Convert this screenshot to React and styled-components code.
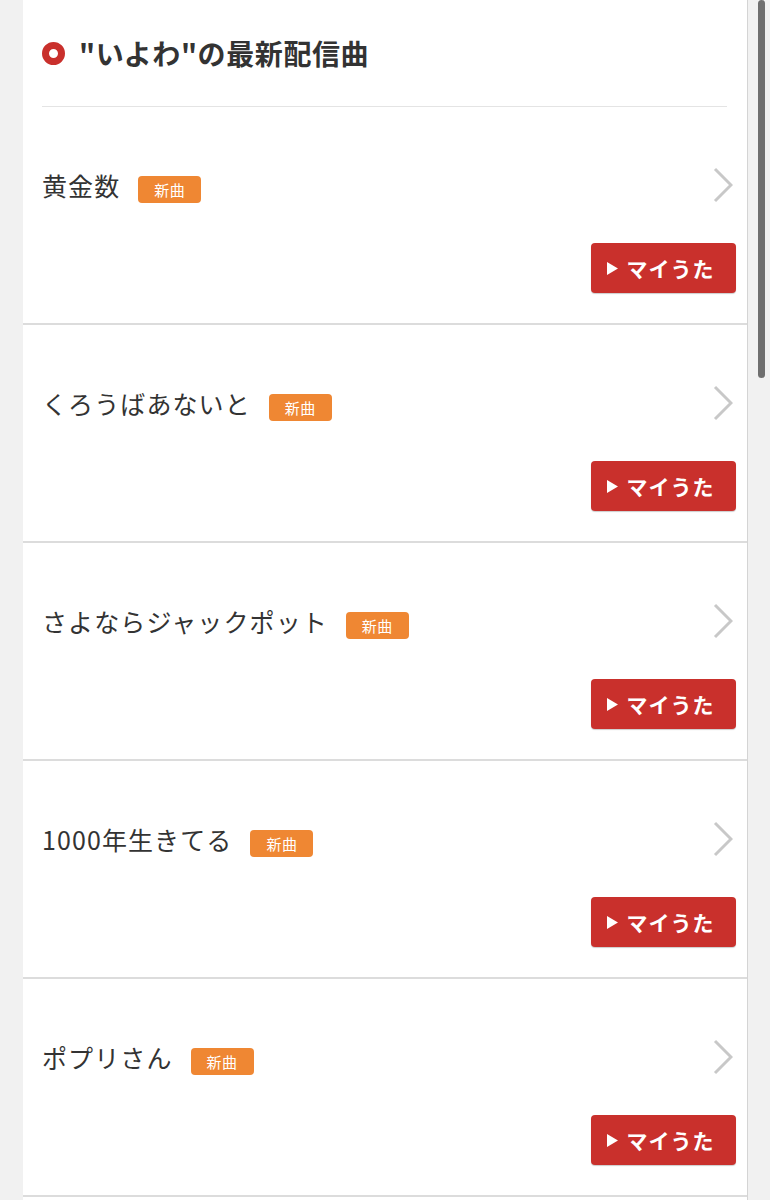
import styled, { createGlobalStyle } from "styled-components"

const songs = ["黄金数", "くろうばあないと", "さよならジャックポット", "1000年生きてる", "ポプリさん"]

const App = () => {
    return (
        <Page>
            <GlobalStyle />
            <Card>
                <Header>
                    <HeaderInner>
                        <RingIcon />
                        <HeaderTitle>"いよわ"の最新配信曲</HeaderTitle>
                    </HeaderInner>
                </Header>
                {songs.map((title) => (
                    <SongRow key={title}>
                        <TitleLine>
                            <SongTitle>{title}</SongTitle>
                            <NewBadge>新曲</NewBadge>
                            <Chevron viewBox="0 0 20 36">
                                <polyline points="2,2 18,18 2,34" />
                            </Chevron>
                        </TitleLine>
                        <MyUtaButton>
                            <svg width="11" height="13" viewBox="0 0 11 13">
                                <polygon points="0,0 11,6.5 0,13" fill="#fff" />
                            </svg>
                            マイうた
                        </MyUtaButton>
                    </SongRow>
                ))}
            </Card>
            <ScrollTrack>
                <ScrollThumb />
            </ScrollTrack>
        </Page>
    )
}

export default App

const GlobalStyle = createGlobalStyle`
html, body {
    margin: 0;
    padding: 0;
    overflow: hidden;
    background: #f1f1f1;
}
* {
    box-sizing: border-box;
}
`

const Page = styled.div`
display: flex;
flex-direction: row;
height: 1200px;
overflow: hidden;
padding-left: 23px;
background: #f1f1f1;
font-family: "Noto Sans CJK JP", "Noto Sans", sans-serif;
color: #333;
`

const Card = styled.div`
width: 725px;
flex-shrink: 0;
background: #fff;
border-right: 1px solid #d4d4d4;
display: flex;
flex-direction: column;
`

const Header = styled.div`
padding: 0 20px 0 19px;
`

const HeaderInner = styled.div`
height: 107px;
display: flex;
flex-direction: row;
align-items: center;
border-bottom: 1px solid #e4e4e4;
`

const RingIcon = styled.span`
width: 23px;
height: 23px;
border-radius: 50%;
border: 7px solid #c9302c;
background: #fff;
margin-right: 14px;
flex-shrink: 0;
`

const HeaderTitle = styled.h2`
margin: 0;
font-size: 28px;
font-weight: 700;
letter-spacing: 0.6px;
color: #333;
`

const SongRow = styled.div`
height: 218px;
flex-shrink: 0;
display: flex;
flex-direction: column;
padding: 60px 11px 30px 19px;
border-bottom: 2px solid #dcdcdc;
`

const TitleLine = styled.div`
height: 36px;
display: flex;
flex-direction: row;
align-items: center;
`

const SongTitle = styled.span`
font-size: 25px;
letter-spacing: 1.1px;
color: #333;
`

const NewBadge = styled.span`
margin-left: 18px;
margin-top: 9px;
width: 63px;
height: 27px;
border-radius: 4px;
background: #ef8733;
color: #fff;
font-size: 15px;
letter-spacing: 0.5px;
display: flex;
align-items: center;
justify-content: center;
`

const Chevron = styled.svg`
margin-left: auto;
margin-right: 3px;
width: 20px;
height: 36px;
fill: none;
stroke: #c8c8c8;
stroke-width: 3;
`

const MyUtaButton = styled.button`
align-self: flex-end;
margin-top: 40px;
width: 145px;
height: 50px;
border: none;
border-radius: 4px;
background: #c9302c;
color: #fff;
font-family: "Noto Sans CJK JP", sans-serif;
font-size: 21px;
font-weight: 700;
letter-spacing: 1px;
display: flex;
align-items: center;
justify-content: center;
gap: 9px;
padding: 0 6px 0 0;
box-shadow: 0 1px 1px rgba(0, 0, 0, 0.2);
`

const ScrollTrack = styled.div`
padding-left: 10px;
`

const ScrollThumb = styled.div`
width: 7px;
height: 378px;
border-radius: 4px;
background: #6f6f6f;
`
